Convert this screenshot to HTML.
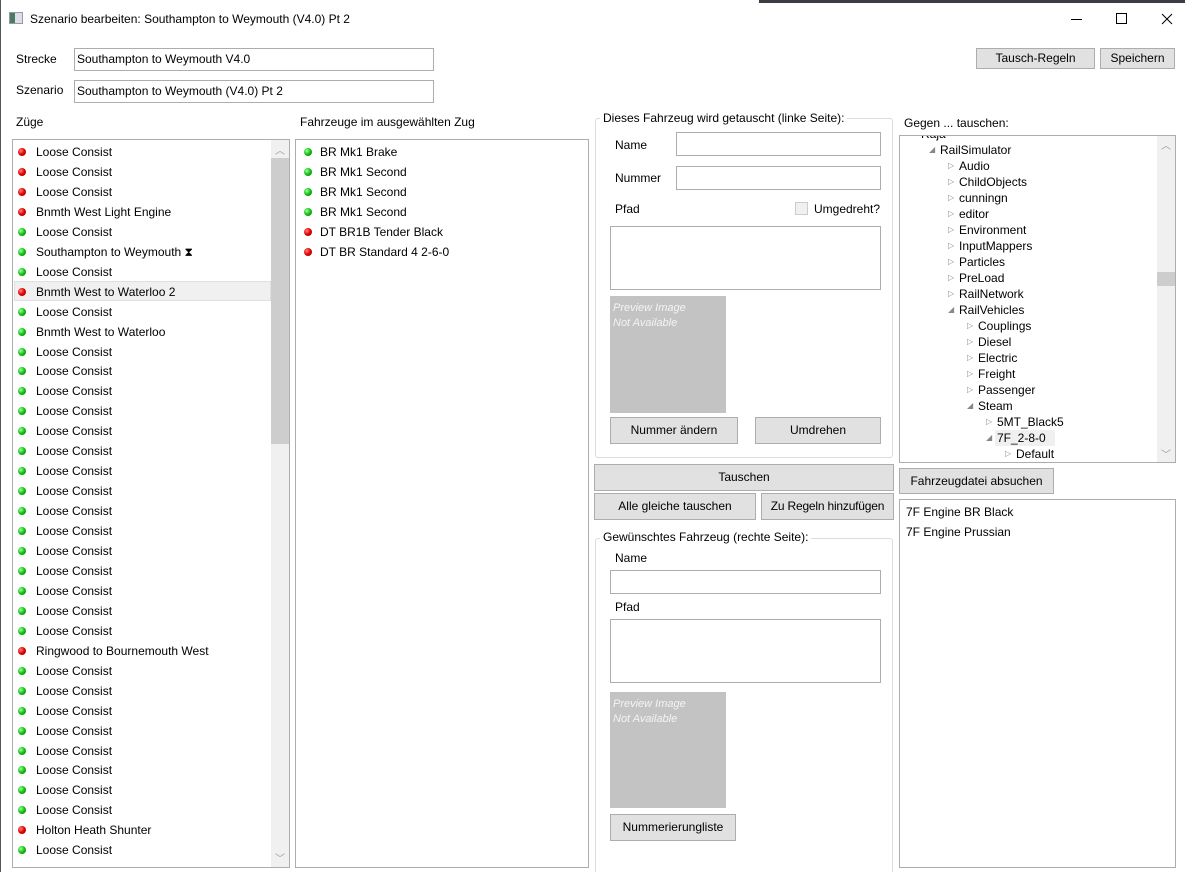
<!DOCTYPE html>
<html style="overflow:hidden;height:872px"><head><meta charset="utf-8"><style>
*{box-sizing:border-box;margin:0;padding:0}
body{width:1185px;height:872px;background:#fff;font-family:"Liberation Sans",sans-serif;font-size:12px;color:#000;position:relative;overflow:hidden}
.a{position:absolute;white-space:nowrap}
.inp{position:absolute;background:#fff;border:1px solid #abadb3}
.btn{position:absolute;background:#e1e1e1;border:1px solid #adadad;text-align:center;font-size:12px}
.box{position:absolute;border:1px solid #abadb3;background:#fff;overflow:hidden}
.row{position:absolute;left:0;height:20px;line-height:20px;white-space:nowrap}
.dot{position:absolute;width:8px;height:8px;border-radius:50%;top:6px}
.r{background:radial-gradient(circle at 35% 35%,#ff8080,#e00000 50%,#900 100%)}
.g{background:radial-gradient(circle at 35% 35%,#a0ffa0,#10c010 50%,#070 100%)}
.grp{position:absolute;border:1px solid #dcdcdc;border-radius:3px}
.gt{position:absolute;background:#fff;padding:0 3px;white-space:nowrap}
.prev{position:absolute;background:#c3c3c3;color:#f4f4f4;font-style:italic;font-size:11px;line-height:15px;padding:5px 3px}
.t{position:absolute;height:16px;line-height:16px;white-space:nowrap}
.ar{position:absolute;font-size:8px;color:#888}
</style></head><body>
<div class="a" style="left:759px;top:0;width:426px;height:3px;background:#3c3c44"></div>
<div class="a" style="left:0;top:0;width:1px;height:872px;background:#555"></div>
<div class="a" style="left:9px;top:12px;width:14px;height:12px;border:1px solid #999;background:linear-gradient(90deg,#4a7a6a 40%,#dde 40%)"></div>
<div class="a" style="left:30px;top:12px">Szenario bearbeiten: Southampton to Weymouth (V4.0) Pt 2</div>
<div class="a" style="left:1071px;top:19px;width:11px;height:1px;background:#000"></div>
<div class="a" style="left:1116px;top:13px;width:11px;height:11px;border:1px solid #000"></div>
<svg class="a" style="left:1161px;top:13px" width="12" height="12"><path d="M1 1L11 11M11 1L1 11" stroke="#000" stroke-width="1"/></svg>

<div class="a" style="left:16px;top:52px">Strecke</div>
<div class="inp" style="left:74px;top:48px;width:360px;height:23px;padding:3px 2px">Southampton to Weymouth V4.0</div>
<div class="a" style="left:16px;top:83px">Szenario</div>
<div class="inp" style="left:74px;top:80px;width:360px;height:23px;padding:3px 2px">Southampton to Weymouth (V4.0) Pt 2</div>
<div class="btn" style="left:976px;top:48px;width:119px;height:21px;line-height:19px">Tausch-Regeln</div>
<div class="btn" style="left:1100px;top:48px;width:75px;height:21px;line-height:19px">Speichern</div>

<div class="a" style="left:16px;top:115px">Züge</div>
<div class="a" style="left:300px;top:115px">Fahrzeuge im ausgewählten Zug</div>

<div class="box" style="left:12px;top:139px;width:278px;height:729px">
<div class="a" style="left:258px;top:0;width:18px;height:727px;background:#f0f0f0"></div>
<div class="a" style="left:258px;top:18px;width:18px;height:286px;background:#cdcdcd"></div>
<div class="a" style="left:262px;top:2px;color:#999;font-size:10px">︿</div>
<div class="a" style="left:262px;top:710px;color:#999;font-size:10px">﹀</div>
<div class="a" style="left:1px;top:141px;width:257px;height:20px;background:#f0f0f0;border:1px solid #e0e0e0"></div>
<div id="L"></div>
</div>

<div class="box" style="left:295px;top:139px;width:294px;height:729px">
<div class="row" style="top:2px"><span class="dot g" style="left:8px"></span><span style="position:absolute;left:24px">BR Mk1 Brake</span></div>
<div class="row" style="top:22px"><span class="dot g" style="left:8px"></span><span style="position:absolute;left:24px">BR Mk1 Second</span></div>
<div class="row" style="top:42px"><span class="dot g" style="left:8px"></span><span style="position:absolute;left:24px">BR Mk1 Second</span></div>
<div class="row" style="top:62px"><span class="dot g" style="left:8px"></span><span style="position:absolute;left:24px">BR Mk1 Second</span></div>
<div class="row" style="top:82px"><span class="dot r" style="left:8px"></span><span style="position:absolute;left:24px">DT BR1B Tender Black</span></div>
<div class="row" style="top:102px"><span class="dot r" style="left:8px"></span><span style="position:absolute;left:24px">DT BR Standard 4 2-6-0</span></div>
</div>

<div class="grp" style="left:595px;top:118px;width:298px;height:340px"></div>
<div class="gt" style="left:600px;top:111px">Dieses Fahrzeug wird getauscht (linke Seite):</div>
<div class="a" style="left:615px;top:138px">Name</div>
<div class="inp" style="left:676px;top:132px;width:205px;height:24px"></div>
<div class="a" style="left:615px;top:171px">Nummer</div>
<div class="inp" style="left:676px;top:166px;width:205px;height:24px"></div>
<div class="a" style="left:615px;top:202px">Pfad</div>
<div class="a" style="left:795px;top:202px;width:13px;height:13px;border:1px solid #ccc;background:#f0f0f0"></div>
<div class="a" style="left:814px;top:202px">Umgedreht?</div>
<div class="inp" style="left:610px;top:226px;width:271px;height:64px"></div>
<div class="prev" style="left:610px;top:296px;width:116px;height:117px">Preview Image<br>Not Available</div>
<div class="btn" style="left:610px;top:417px;width:128px;height:27px;line-height:25px">Nummer ändern</div>
<div class="btn" style="left:755px;top:417px;width:126px;height:27px;line-height:25px">Umdrehen</div>
<div class="btn" style="left:594px;top:464px;width:300px;height:27px;line-height:25px">Tauschen</div>
<div class="btn" style="left:594px;top:493px;width:162px;height:27px;line-height:25px">Alle gleiche tauschen</div>
<div class="btn" style="left:761px;top:493px;width:133px;height:27px;line-height:25px;letter-spacing:-0.2px">Zu Regeln hinzufügen</div>

<div class="grp" style="left:595px;top:538px;width:298px;height:340px"></div>
<div class="gt" style="left:600px;top:530px">Gewünschtes Fahrzeug (rechte Seite):</div>
<div class="a" style="left:615px;top:551px">Name</div>
<div class="inp" style="left:610px;top:570px;width:271px;height:24px"></div>
<div class="a" style="left:615px;top:600px">Pfad</div>
<div class="inp" style="left:610px;top:619px;width:271px;height:64px"></div>
<div class="prev" style="left:610px;top:692px;width:116px;height:116px">Preview Image<br>Not Available</div>
<div class="btn" style="left:610px;top:814px;width:126px;height:27px;line-height:25px">Nummerierungliste</div>

<div class="a" style="left:904px;top:116px">Gegen ... tauschen:</div>
<div class="box" style="left:899px;top:135px;width:277px;height:328px">
<div class="a" style="left:257px;top:0;width:18px;height:326px;background:#f0f0f0"></div>
<div class="a" style="left:257px;top:136px;width:18px;height:14px;background:#cdcdcd"></div>
<div class="a" style="left:261px;top:1px;color:#999;font-size:10px">︿</div>
<div class="a" style="left:261px;top:310px;color:#999;font-size:10px">﹀</div>
<div id="T"></div>
</div>
<div class="btn" style="left:899px;top:468px;width:155px;height:26px;line-height:24px">Fahrzeugdatei absuchen</div>
<div class="box" style="left:899px;top:499px;width:277px;height:369px">
<div class="a" style="left:6px;top:5px">7F Engine BR Black</div>
<div class="a" style="left:6px;top:25px">7F Engine Prussian</div>
</div>

<script>
var L=[["r","Loose Consist"],["r","Loose Consist"],["r","Loose Consist"],["r","Bnmth West Light Engine"],["g","Loose Consist"],["g","Southampton to Weymouth \u29D7"],["g","Loose Consist"],["r","Bnmth West to Waterloo 2"],["g","Loose Consist"],["g","Bnmth West to Waterloo"]];
for(var i=0;i<15;i++)L.push(["g","Loose Consist"]);
L.push(["r","Ringwood to Bournemouth West"]);
for(i=0;i<8;i++)L.push(["g","Loose Consist"]);
L.push(["r","Holton Heath Shunter"]);L.push(["g","Loose Consist"]);
var h="";
for(i=0;i<L.length;i++){h+='<div class="row" style="top:'+(2+i*19.95)+'px"><span class="dot '+L[i][0]+'" style="left:5px"></span><span style="position:absolute;left:23px">'+L[i][1]+'</span></div>';}
document.getElementById("L").innerHTML=h;
var T=[[0,"",'Raja'],[1,"\u25E2","RailSimulator"],[2,"\u25B7","Audio"],[2,"\u25B7","ChildObjects"],[2,"\u25B7","cunningn"],[2,"\u25B7","editor"],[2,"\u25B7","Environment"],[2,"\u25B7","InputMappers"],[2,"\u25B7","Particles"],[2,"\u25B7","PreLoad"],[2,"\u25B7","RailNetwork"],[2,"\u25E2","RailVehicles"],[3,"\u25B7","Couplings"],[3,"\u25B7","Diesel"],[3,"\u25B7","Electric"],[3,"\u25B7","Freight"],[3,"\u25B7","Passenger"],[3,"\u25E2","Steam"],[4,"\u25B7","5MT_Black5"],[4,"\u25E2","7F_2-8-0"],[5,"\u25B7","Default"]];
h="";
for(i=0;i<T.length;i++){var y=-10+i*16,x=40+(T[i][0]-1)*19;
if(i==19)h+='<div class="a" style="left:'+(x-2)+'px;top:'+y+'px;width:60px;height:16px;background:#f0f0f0"></div>';
h+='<span class="ar" style="left:'+(x-11)+'px;top:'+(y+3)+'px">'+T[i][1]+'</span><div class="t" style="left:'+x+'px;top:'+y+'px">'+T[i][2]+'</div>';}
document.getElementById("T").innerHTML=h;
</script>
</body></html>
